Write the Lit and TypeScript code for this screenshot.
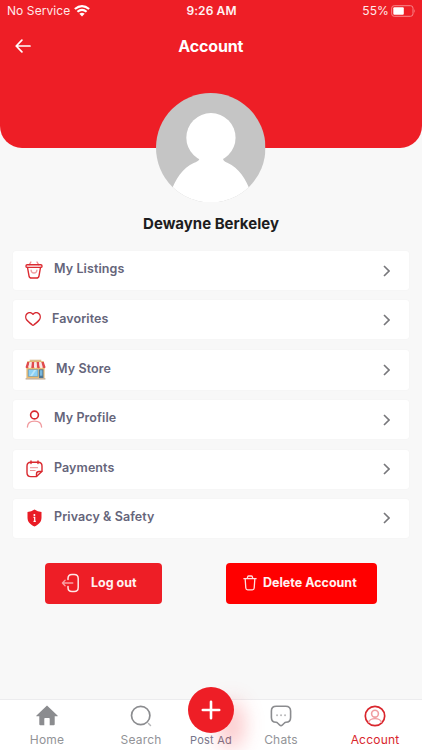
import { LitElement, html, css, svg } from "lit";
import { customElement, property } from "lit/decorators.js";

const icons: Record<string, unknown> = {
  basket: html`<svg width="18" height="18" viewBox="0 0 18 18" fill="none" stroke="#dc2a31" stroke-width="1.4" stroke-linecap="round" stroke-linejoin="round">
    <path d="M5.9 1 4.3 3.7M12 1l1.6 2.7" stroke="#ee8e92"/><rect x="1" y="3.8" width="16" height="2.6" rx="1.2"/>
    <path d="M2.5 6.5 4 14.8Q4.3 17 6.5 17h5q2.2 0 2.5-2.2l1.5-8.3"/><path d="M6.1 9.2q.3 2.8 2.9 2.8t2.9-2.8" stroke="#ee9da0"/></svg>`,
  heart: html`<svg width="16" height="14" viewBox="0 0 16 14" fill="none" stroke="#d6262e" stroke-width="1.4" stroke-linejoin="round"><path d="M8 2.3C6.5.2 3.7.1 2 1.8.3 3.5.4 6.4 2 8.3c1.4 1.7 3.6 3.2 5 4.5q1 .8 2 0c1.4-1.3 3.6-2.8 5-4.5 1.6-1.9 1.7-4.8 0-6.5C12.3.1 9.5.2 8 2.3Z"/></svg>`,
  store: html`<svg width="21" height="21" viewBox="0 0 21 21">
    <path d="M4.7.7h11.6v3H4.7z" fill="#d9bd8f"/><path d="M1.4 8h18.2v11.3H1.4z" fill="#eabb72"/><path d="M2.2 2.2h16.6v2H2.2z" fill="#e5b46b"/>
    <rect x="2.8" y="10.3" width="10.6" height="7.4" fill="#769fb5"/><rect x="3.8" y="11" width="8.7" height="6" fill="#8bd0f5"/><path d="m5 17 4-6h2.2l-4 6z" fill="#b9e4f8"/>
    <rect x="14" y="10.3" width="4.4" height="9.2" fill="#507591"/><rect x="15" y="11.2" width="2.4" height="5.5" fill="#79b8dd"/>
    ${[0, 1, 2, 3, 4, 5, 6].map((i) => svg`<path d=${`M${2.2 + i * 2.37} 3h2.37L${3.4 + i * 2.86} 8.2q-1.4 2-2.86 0z`} fill=${i % 2 ? "#f7e9e6" : "#e04a4d"}/>`)}
    <path d="M.6 19h19.8v1.6H.6z" fill="#c9b59e"/></svg>`,
  profile: html`<svg width="17" height="18" viewBox="0 0 17 18" fill="none" stroke-width="1.6" stroke-linecap="round"><circle cx="8.5" cy="5" r="3.9" stroke="#d9292f"/><path d="M1.4 17c.2-3.5 3-5.8 7.1-5.8s6.9 2.3 7.1 5.8" stroke="#f0999d" stroke-width="1.3"/></svg>`,
  payments: html`<svg width="17" height="18" viewBox="0 0 17 18" fill="none" stroke="#d9292f" stroke-width="1.4" stroke-linecap="round" stroke-linejoin="round"><path d="M5 1v2.6M12 1v2.6"/><path d="M4.8 2.2h7.4q3.8 0 3.8 3.8v5.3L10.5 16.6H4.8Q1 16.6 1 12.8V6q0-3.8 3.8-3.8Z"/><path d="M10.5 16.4v-2.5q0-2.4 2.5-2.4h2.8"/><path d="M4.4 7.7h7.2M4.4 10.5h4.8" stroke="#ed8f93" stroke-width="1"/></svg>`,
  shield: html`<svg width="15" height="18" viewBox="0 0 15 18"><path d="M7.5.6Q10.6 3 14.5 3.1V8.5c0 4.2-2.4 7-7 8.9C2.9 15.5.5 12.7.5 8.5V3.1Q4.4 3 7.5.6Z" fill="#e91c25"/><circle cx="7.4" cy="6" r="1" fill="#fff"/><path d="M6.5 8.3h1.2v3.9M6.5 12.4h2.300" fill="none" stroke="#fff" stroke-width="1.2"/></svg>`,
  logout: html`<svg width="20" height="20" viewBox="0 0 20 20" fill="none" stroke="#ffe6e6" stroke-width="1.5" stroke-linecap="round" stroke-linejoin="round"><path d="M7 6.5V5.5q0-4 4-4h2.2q4 0 4 4v9q0 4-4 4H11q-4 0-4-4v-1"/><path d="M11.8 10H1.4m2.7-2.7L1.4 10l2.7 2.7" stroke="#f9a1a4" stroke-width="1.3"/></svg>`,
  trash: html`<svg width="14" height="16" viewBox="0 0 14 16" fill="none" stroke="#ffdfdf" stroke-width="1.3" stroke-linecap="round" stroke-linejoin="round"><path d="M.9 3.7h12.2M4.3 3.4l.4-1.7Q4.9 1 5.7 1h2.6q.8 0 1 .7l.4 1.7M2.2 4.2l.6 8.8q.1 1.8 1.9 1.8h4.6q1.8 0 1.9-1.8l.6-8.8"/></svg>`,
  home: html`<svg width="22" height="21" viewBox="0 0 22 21"><path d="M11 .5 21.5 10.5q.6.6-.2.7h-2.6v8q0 1-1 1h-4v-6.5q0-.7-.7-.7H9q-.7 0-.7.7v6.5h-4q-1 0-1-1v-8H.7q-.8-.1-.2-.7Z" fill="#8b8c8f"/></svg>`,
  search: html`<svg width="22" height="22" viewBox="0 0 22 22" fill="none" stroke="#8b8c8f" stroke-linecap="round"><circle cx="10.7" cy="10.5" r="9.2" stroke-width="1.7"/><path d="m18.5 18.5 2 2" stroke="#b5b6b8" stroke-width="1.5"/></svg>`,
  chat: html`<svg width="22" height="22" viewBox="0 0 22 22" fill="none" stroke="#8b8c8f" stroke-width="1.6" stroke-linejoin="round"><path d="M6.3 1.2h9.4q4.9 0 4.9 4.9v6.3q0 4.8-4.7 4.9-.9 0-1.5.7l-2 2q-1.4 1.4-2.8 0l-2-2q-.6-.7-1.5-.7-4.7-.1-4.7-4.9V6.1q0-4.9 4.9-4.9Z"/><path d="M7 10.2h.1M11 10.2h.1M15 10.2h.1" stroke="#b9b9bb" stroke-width="1.9" stroke-linecap="round"/></svg>`,
  account: html`<svg width="22" height="22" viewBox="0 0 22 22" fill="none"><circle cx="11" cy="11" r="9.7" stroke="#d9262d" stroke-width="1.7"/><circle cx="11" cy="8.7" r="3.4" stroke="#f09da0" stroke-width="1.6"/><path d="M4.4 17.6c.7-2.5 3.3-4 6.6-4s5.9 1.5 6.6 4" stroke="#f09da0" stroke-width="1.4"/></svg>`,
};

@customElement("menu-row")
class MenuRow extends LitElement {
  @property() icon = "";
  @property() label = "";
  static styles = css`
    :host { display: flex; align-items: center; background: #fff; border-radius: 3px; box-shadow: 0 0 2px #0000000a; padding: 0 19px 0 12px; box-sizing: border-box; }
    .icon { display: flex; margin-right: 11px; padding-bottom: 1px; }
    .store { margin-right: 10px; }
    .profile, .payments { margin: 0 11px 0 1px; }
    .shield { margin: 0 12px 0 2px; }
    .label { flex: 1; font: 600 12.5px/18px Inter, sans-serif; letter-spacing: .09px; color: #65657a; padding-bottom: 2.4px; white-space: nowrap; }
    .chevron { display: block; }
  `;
  render() {
    return html`<span class="icon ${this.icon}">${icons[this.icon]}</span><span class="label">${this.label}</span>
      <svg class="chevron" width="7" height="12" viewBox="0 0 7 12" fill="none" stroke="#77777b" stroke-width="1.6"><path d="m1 1 5 5-5 5"/></svg>`;
  }
}

@customElement("app-root")
class AppRoot extends LitElement {
  static styles = css`
    :host { display: flex; flex-direction: column; width: 422px; height: 750px; overflow: hidden; position: relative; background: #f8f8f8; font-family: Inter, sans-serif; }
    svg { display: block; }
    .hero { height: 147.5px; flex: none; box-sizing: border-box; background: #ee1e26; border-radius: 0 0 22px 22px; color: #fff; }
    .status { display: grid; grid-template-columns: 1fr auto 1fr; align-items: center; height: 22px; padding: 0 6px 0 7px; font: 400 12px/22px Inter, sans-serif; color: #ffe9e9; }
    .carrier { display: flex; align-items: center; gap: 4px; letter-spacing: .08px; }
    .clock { font-weight: 600; letter-spacing: .1px; color: #fff2f2; }
    .power { display: flex; align-items: center; justify-content: flex-end; gap: 2px; letter-spacing: .1px; }
    .title { display: grid; grid-template-columns: 1fr auto 1fr; align-items: center; height: 48px; padding: 0 15.5px 0 15px; }
    h1 { margin: 0; font: 700 16px/22px Inter, sans-serif; letter-spacing: -.14px; }
    .avatar { align-self: center; width: 109.5px; height: 109.5px; margin: -55px 0 0; flex: none; }
    h2 { margin: 12px 0 0; text-align: center; font: 700 15px/20px Inter, sans-serif; color: #1d1d20; }
    .menu { display: grid; grid-template-rows: 39px 39px 40px 39px 39px 39px; row-gap: 10.4px; margin: 17px 13px 0; }
    .actions { display: flex; justify-content: space-between; margin: 25px 45px 0; }
    button { display: flex; align-items: center; border: 0; border-radius: 4px; height: 41px; padding: 0 0 0 17px; color: #fff1f1; font: 700 12.5px/18px Inter, sans-serif; }
    .logout { width: 117px; background: #ee1e26; gap: 10px; padding-left: 16px; }
    .delete { width: 151px; background: #ff0000; gap: 6px; }
    .tabs { margin-top: auto; flex: none; height: 50px; display: grid; grid-template-columns: 94px 94px 46px 94px 94px; background: #fff; box-shadow: 0 -1px #ececee; position: relative; }
    .tab { display: flex; flex-direction: column; align-items: center; color: #929397; font: 400 12px/16px Inter, sans-serif; letter-spacing: .2px; position: relative; padding-top: 5px; }
    .tab span { margin-top: 5px; white-space: nowrap; }
    .home span { margin-top: 6px; }
    .active { color: #d9262d; }
    .post { padding-top: 32px; font-size: 11px; color: #77778b; }
    .post span { margin-top: 0; }
    .glow { position: absolute; width: 26px; height: 50px; left: 30px; top: 0; border-radius: 50%; background: #ee1e2640; filter: blur(10px); }
    .fab { position: absolute; top: -13px; left: 0; width: 46px; height: 46px; border-radius: 50%; background: #ee1e26; display: grid; place-items: center; }
  `;
  render() {
    const rows = [["basket", "My Listings"], ["heart", "Favorites"], ["store", "My Store"], ["profile", "My Profile"], ["payments", "Payments"], ["shield", "Privacy & Safety"]];
    return html`
      <header class="hero">
        <div class="status">
          <span class="carrier">No Service<svg width="16" height="12" viewBox="0 0 15 12" preserveAspectRatio="none" fill="none" stroke="#fff" stroke-width="2"><path d="M.8 4.1q6.7-6 13.4 0M3.2 6.8q4.3-3.8 8.6 0"/><path d="M5 8.8q2.5-2 5 0L7.5 11.5Z" fill="#fff" stroke="none"/></svg></span>
          <span class="clock">9:26 AM</span>
          <span class="power">55%<svg width="25" height="12" viewBox="0 0 25 12"><rect x=".7" y=".7" width="21.3" height="10.6" rx="2.5" fill="none" stroke="#f8878b"/><rect x="2.3" y="2.3" width="10.5" height="7.4" rx="1" fill="#fff"/><path d="M23.3 4q1.5 2 0 4Z" fill="#f8878b"/></svg></span>
        </div>
        <div class="title">
          <svg width="16" height="14" viewBox="0 0 16 14" fill="none" stroke="#fff" stroke-width="1.7" stroke-linecap="round" stroke-linejoin="round"><path d="M15 7H1.2m5.7-5.900L1.2 7l5.7 5.900"/></svg>
          <h1>Account</h1><span></span>
        </div>
      </header>
      <svg class="avatar" viewBox="0 0 109 109"><defs><clipPath id="round"><circle cx="54.5" cy="54.5" r="54.5"/></clipPath></defs>
        <g clip-path="url(#round)"><path d="M0 0h109v109H0z" fill="#c5c5c5"/><circle cx="54.7" cy="44.5" r="24.5" fill="#fff"/><path d="M43 64c1 3-2 4-5 5.5C26 75 20 85 14 100v9h81v-9C89 85 83 75 71 69.5 68 68 66 67 67 64Z" fill="#fff"/></g></svg>
      <h2>Dewayne Berkeley</h2>
      <nav class="menu">${rows.map(([icon, label]) => html`<menu-row .icon=${icon} .label=${label}></menu-row>`)}</nav>
      <div class="actions">
        <button class="logout">${icons.logout}<span>Log out</span></button>
        <button class="delete">${icons.trash}<span>Delete Account</span></button>
      </div>
      <footer class="tabs">
        <div class="tab home">${icons.home}<span>Home</span></div>
        <div class="tab">${icons.search}<span>Search</span></div>
        <div class="tab post"><i class="glow"></i><i class="fab"><svg width="20" height="20" viewBox="0 0 20 20" stroke="#fff" stroke-width="2.6" stroke-linecap="round"><path d="M10 1.8v16.4M1.8 10h16.4"/></svg></i><span>Post Ad</span></div>
        <div class="tab">${icons.chat}<span>Chats</span></div>
        <div class="tab active">${icons.account}<span>Account</span></div>
      </footer>`;
  }
}
